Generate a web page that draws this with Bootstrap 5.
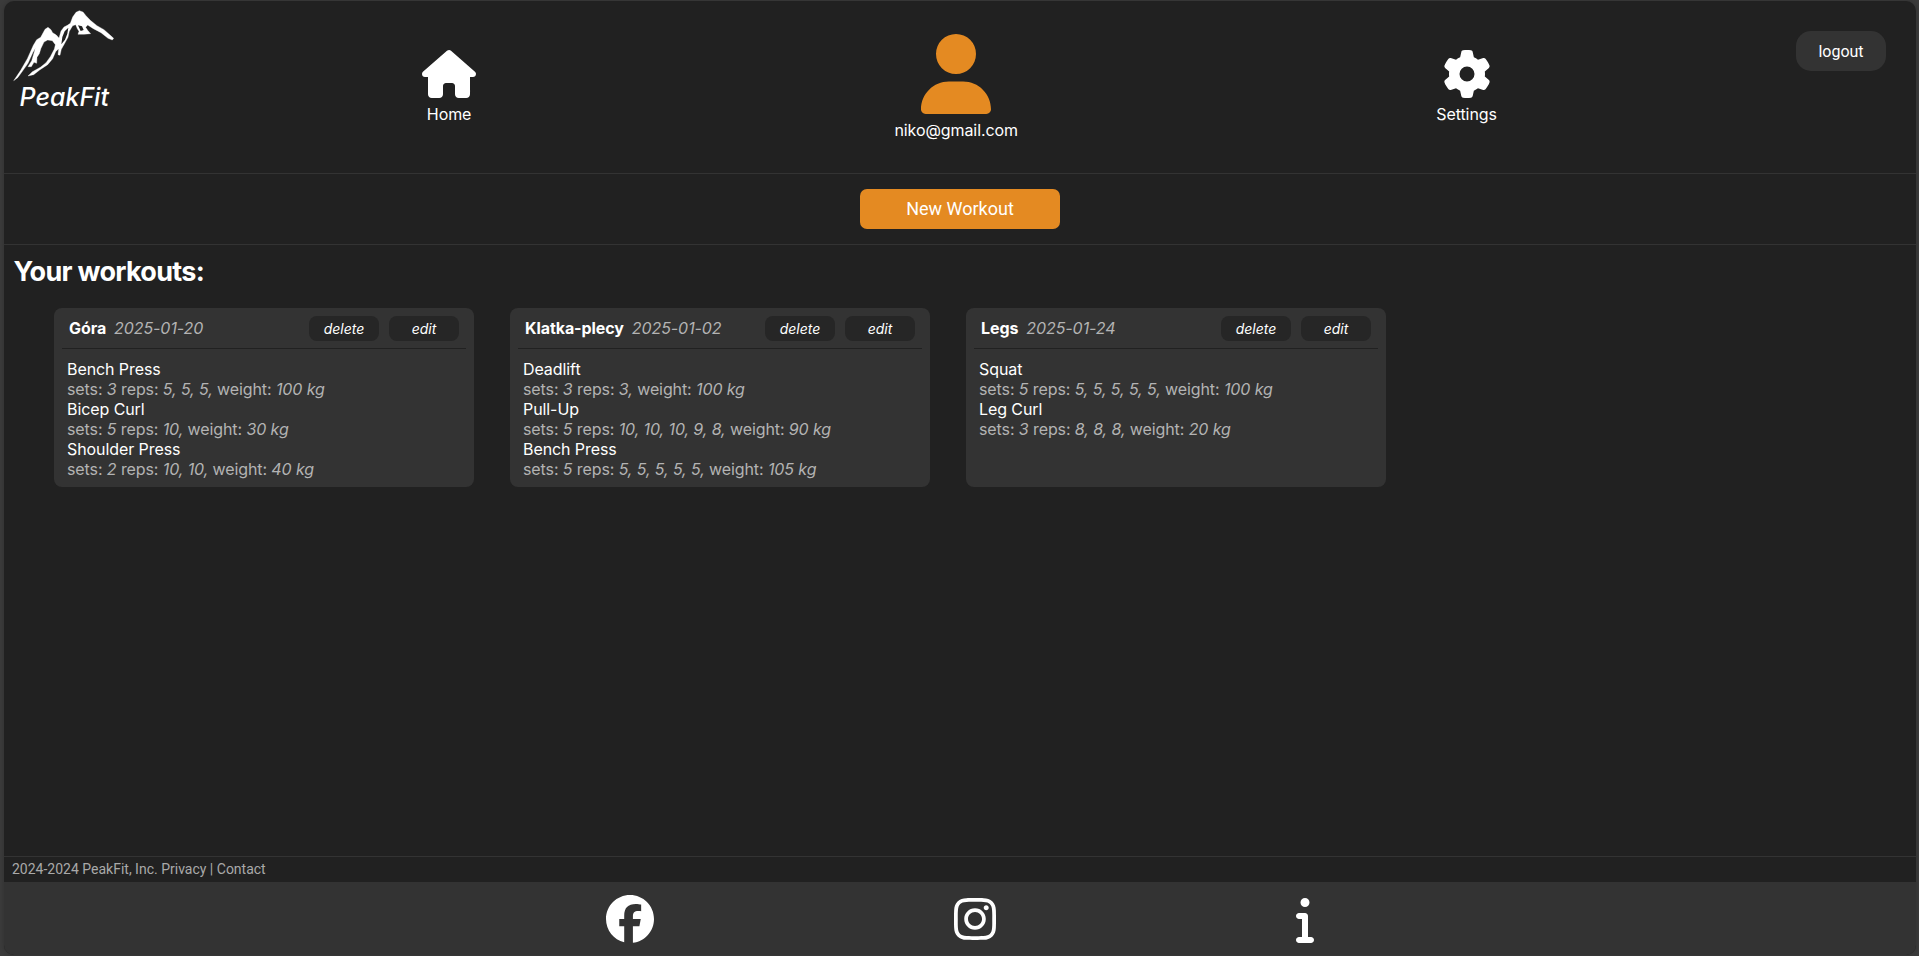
<!DOCTYPE html>
<html lang="en">
<head>
<meta charset="utf-8">
<title>PeakFit</title>
<link href="https://cdn.jsdelivr.net/npm/bootstrap@5.3.0/dist/css/bootstrap.min.css" rel="stylesheet">
<style>
html,body{height:100%}
body{background:#3b3b3b;color:#fff;font-family:Inter,sans-serif;font-size:16px;line-height:20px;letter-spacing:-.08px;padding:1px 3px 1px 4px;overflow:hidden}
a{color:inherit;text-decoration:none}
svg{fill:currentColor;display:block}
.shell{background:#212121;border-radius:10px;overflow:hidden;box-shadow:0 0 5px rgba(0,0,0,.2)}
.topbar{height:173px;border-bottom:1px solid #333}
.side{width:209px}
.side-end{width:210px}
.brand{width:120px;padding-top:7px}
.brand svg{margin-left:-4px}
.brand-name{font-size:25px;line-height:30px;font-style:italic;font-weight:500;letter-spacing:0;padding-left:15.5px;margin-top:-2px}
.rb{font-family:Roboto,sans-serif;letter-spacing:0}
.nav-home{padding-top:49px}
.nav-user{padding-top:33px}
.nav-home span,.nav-user span{margin-top:6px}
.nav-user svg{color:#e48a22}
.btn-logout{width:90px;height:40px;border-radius:15px;background:#333;color:#fff;padding:2px 0 0;margin:30px 30px 0 0}
.actions{height:71px;border-bottom:1px solid #333}
.btn-new{width:200px;height:40px;border-radius:7px;background:#e48a22;color:#fff;font-size:18px;padding:0 0 2px}
.heading{font-size:27px;line-height:32px;font-weight:700;letter-spacing:-.7px;margin:11px 0 20px 9.5px}
.cards{gap:36px;padding-left:50px}
.workout{width:420px;height:179px;background:#333;border-radius:8px;padding:8px}
.workout-head{height:33px;border-bottom:1px solid #212121;padding:0 7px}
.workout-head b,.workout-head .date{padding-top:2px}
.workout-head .date{color:#b3b3b3;font-style:italic;margin-left:8px}
.mini-group{gap:10px}
.btn-mini{width:70px;height:25px;border-radius:8px;background:#262626;color:#fff;font-size:14px;line-height:23px;font-style:italic;padding:0;border:0}
.workout-list{padding:10px 5px 0}
.workout-list p{margin:0;color:#b3b3b3;white-space:nowrap;letter-spacing:-.1px}
.copy{height:26px;border-top:1px solid #333;color:#a9a9a9;font-size:14px;line-height:25px;padding-left:8px}
.social{height:73px;background:#333;gap:300px}
</style>
</head>
<body>
<div class="shell h-100 d-flex flex-column">
  <header class="topbar d-flex flex-shrink-0">
    <div class="side">
      <a class="brand d-block" href="#">
        <svg width="120" height="76" viewBox="0 24 360 228"><path stroke="#fff" stroke-width="1" stroke-linejoin="round" d="M41 242L62 211 82 176 100 136 110 119 122 112 135 88 144 82 153 89 158 98 169 105 177 114 183 93 192 81 202 76 211 70 218 51 228 37 238 32 249 36 258 47 271 61 291 77 312 89 331 106 341 115 337 120 324 115 303 98 280 86 263 75 257 82 263 91 272 101 252 103 234 103 237 94 232 86 227 74 218 77 208 94 204 112 193 132 184 148 180 166 174 164 176 146 167 155 158 176 143 194 119 210 101 224 84 228 97 215 121 202 138 188 151 170 163 147 166 134 157 122 143 120 132 126 123 145 118 161 111 172 110 190 102 187 94 200 84 200 95 182 101 162 106 145 99 157 84 190 65 217 53 233Z"/><path fill="#212121" d="M205 83L194 94 187 111 184 133 195 119 202 101ZM234 76L242 93 251 90 246 79Z"/></svg>
        <div class="brand-name">PeakFit</div>
      </a>
    </div>
    <nav class="flex-grow-1 d-flex justify-content-around">
      <a href="#" class="nav-home d-flex flex-column align-items-center"><svg width="54" height="48" viewBox="0 0 576 512"><path d="M575.8 255.5c0 18-15 32.1-32 32.1h-32l.7 160.2c0 2.7-.2 5.4-.5 8.1V472c0 22.1-17.9 40-40 40H456c-1.1 0-2.2 0-3.3-.1c-1.4 .1-2.8 .1-4.2 .1H416 392c-22.1 0-40-17.9-40-40V448 384c0-17.7-14.3-32-32-32H256c-17.7 0-32 14.3-32 32v64 24c0 22.1-17.9 40-40 40H160 128.1c-1.5 0-3-.1-4.5-.2c-1.2 .1-2.4 .2-3.6 .2H104c-22.1 0-40-17.9-40-40V360c0-.9 0-1.9 .1-2.8V287.6H32c-18 0-32-14-32-32.1c0-9 3-17 10-24L266.4 8c7-7 15-8 22-8s15 2 21 7L564.8 231.5c8 7 12 15 11 24z"/></svg><span>Home</span></a>
      <a href="#" class="nav-user d-flex flex-column align-items-center"><svg width="70" height="80" viewBox="0 0 448 512"><path d="M224 256A128 128 0 1 0 224 0a128 128 0 1 0 0 256zm-45.7 48C79.8 304 0 383.8 0 482.3C0 498.7 13.3 512 29.7 512H418.3c16.4 0 29.7-13.3 29.7-29.7C448 383.8 368.2 304 269.7 304H178.3z"/></svg><span>niko@gmail.com</span></a>
      <a href="#" class="nav-home d-flex flex-column align-items-center"><svg width="48" height="48" viewBox="0 0 512 512"><path d="M495.9 166.6c3.2 8.7 .5 18.4-6.4 24.6l-43.3 39.4c1.1 8.3 1.7 16.8 1.7 25.4s-.6 17.1-1.7 25.4l43.3 39.4c6.9 6.2 9.6 15.9 6.4 24.6c-4.4 11.9-9.7 23.3-15.8 34.3l-4.7 8.1c-6.6 11-14 21.4-22.1 31.2c-5.9 7.2-15.7 9.6-24.5 6.8l-55.7-17.7c-13.4 10.3-28.2 18.9-44 25.4l-12.5 57.1c-2 9.1-9 16.3-18.2 17.8c-13.8 2.3-28 3.5-42.5 3.5s-28.7-1.2-42.5-3.5c-9.2-1.5-16.2-8.7-18.2-17.8l-12.5-57.1c-15.8-6.5-30.6-15.1-44-25.4L83.1 425.9c-8.8 2.8-18.6 .3-24.5-6.8c-8.1-9.8-15.5-20.2-22.1-31.2l-4.7-8.1c-6.1-11-11.4-22.4-15.8-34.3c-3.2-8.7-.5-18.4 6.4-24.6l43.3-39.4C64.6 273.1 64 264.6 64 256s.6-17.1 1.7-25.4L22.4 191.2c-6.9-6.2-9.6-15.9-6.4-24.6c4.4-11.9 9.7-23.3 15.8-34.3l4.7-8.1c6.6-11 14-21.4 22.1-31.2c5.9-7.2 15.7-9.6 24.5-6.8l55.7 17.7c13.4-10.3 28.2-18.9 44-25.4l12.5-57.1c2-9.1 9-16.3 18.2-17.8C227.3 1.2 241.5 0 256 0s28.7 1.2 42.5 3.5c9.2 1.5 16.2 8.7 18.2 17.8l12.5 57.1c15.8 6.5 30.6 15.1 44 25.4l55.7-17.7c8.8-2.8 18.6-.3 24.5 6.8c8.1 9.8 15.5 20.2 22.1 31.2l4.7 8.1c6.1 11 11.4 22.4 15.8 34.3zM256 336a80 80 0 1 0 0-160 80 80 0 1 0 0 160z"/></svg><span>Settings</span></a>
    </nav>
    <div class="side-end d-flex justify-content-end"><button class="btn btn-logout rb">logout</button></div>
  </header>
  <div class="actions d-flex flex-shrink-0 justify-content-center align-items-center"><button class="btn btn-new rb">New Workout</button></div>
  <main class="flex-grow-1">
    <h1 class="heading">Your workouts:</h1>
    <div class="cards d-flex">
      <section class="workout">
        <div class="workout-head d-flex"><b>Góra</b><span class="date">2025-01-20</span><div class="ms-auto d-flex mini-group"><button class="btn btn-mini">delete</button><button class="btn btn-mini">edit</button></div></div>
        <div class="workout-list">
          <div>Bench Press</div><p>sets: <i>3</i> reps: <i>5, 5, 5, </i>weight: <i>100 kg</i></p>
          <div>Bicep Curl</div><p>sets: <i>5</i> reps: <i>10, </i>weight: <i>30 kg</i></p>
          <div>Shoulder Press</div><p>sets: <i>2</i> reps: <i>10, 10, </i>weight: <i>40 kg</i></p>
        </div>
      </section>
      <section class="workout">
        <div class="workout-head d-flex"><b>Klatka-plecy</b><span class="date">2025-01-02</span><div class="ms-auto d-flex mini-group"><button class="btn btn-mini">delete</button><button class="btn btn-mini">edit</button></div></div>
        <div class="workout-list">
          <div>Deadlift</div><p>sets: <i>3</i> reps: <i>3, </i>weight: <i>100 kg</i></p>
          <div>Pull-Up</div><p>sets: <i>5</i> reps: <i>10, 10, 10, 9, 8, </i>weight: <i>90 kg</i></p>
          <div>Bench Press</div><p>sets: <i>5</i> reps: <i>5, 5, 5, 5, 5, </i>weight: <i>105 kg</i></p>
        </div>
      </section>
      <section class="workout">
        <div class="workout-head d-flex"><b>Legs</b><span class="date">2025-01-24</span><div class="ms-auto d-flex mini-group"><button class="btn btn-mini">delete</button><button class="btn btn-mini">edit</button></div></div>
        <div class="workout-list">
          <div>Squat</div><p>sets: <i>5</i> reps: <i>5, 5, 5, 5, 5, </i>weight: <i>100 kg</i></p>
          <div>Leg Curl</div><p>sets: <i>3</i> reps: <i>8, 8, 8, </i>weight: <i>20 kg</i></p>
        </div>
      </section>
    </div>
  </main>
  <footer class="flex-shrink-0">
    <div class="copy rb">2024-2024 PeakFit, Inc. <a href="#">Privacy</a> | <a href="#">Contact</a></div>
    <div class="social d-flex justify-content-center align-items-center">
      <a href="#"><svg width="48" height="48" viewBox="0 0 512 512"><path d="M512 256C512 114.6 397.4 0 256 0S0 114.6 0 256C0 376 82.7 476.8 194.2 504.5V334.2H141.4V256h52.8V222.3c0-87.1 39.4-127.5 125-127.5c16.2 0 44.2 3.2 55.7 6.4V172c-6-.6-16.5-1-29.6-1c-42 0-58.2 15.9-58.2 57.2V256h83.6l-14.4 78.2H287V510.1C413.8 494.8 512 386.9 512 256h0z"/></svg></a>
      <a href="#"><svg width="42" height="48" viewBox="0 0 448 512"><path d="M224.1 141c-63.6 0-114.9 51.3-114.9 114.9s51.3 114.9 114.9 114.9S339 319.5 339 255.9 287.7 141 224.1 141zm0 189.6c-41.1 0-74.7-33.5-74.7-74.7s33.5-74.7 74.7-74.7 74.7 33.5 74.7 74.7-33.6 74.7-74.7 74.7zm146.4-194.3c0 14.9-12 26.8-26.8 26.8-14.9 0-26.8-12-26.8-26.8s12-26.8 26.8-26.8 26.8 12 26.8 26.8zm76.1 27.2c-1.7-35.9-9.9-67.7-36.2-93.9-26.2-26.2-58-34.4-93.9-36.2-37-2.1-147.9-2.1-184.9 0-35.8 1.7-67.6 9.9-93.9 36.1s-34.4 58-36.2 93.9c-2.1 37-2.1 147.9 0 184.9 1.7 35.9 9.9 67.7 36.2 93.9s58 34.4 93.9 36.2c37 2.1 147.9 2.1 184.9 0 35.9-1.7 67.7-9.9 93.9-36.2 26.2-26.2 34.4-58 36.2-93.9 2.1-37 2.1-147.8 0-184.8zM398.8 388c-7.8 19.6-22.9 34.7-42.6 42.6-29.5 11.7-99.5 9-132.1 9s-102.7 2.6-132.1-9c-19.6-7.8-34.7-22.9-42.6-42.6-11.7-29.5-9-99.5-9-132.1s-2.6-102.7 9-132.1c7.8-19.6 22.9-34.7 42.6-42.6 29.5-11.7 99.5-9 132.1-9s102.7-2.6 132.1 9c19.6 7.8 34.7 22.9 42.6 42.6 11.7 29.5 9 99.5 9 132.1s2.7 102.7-9 132.1z"/></svg></a>
      <a href="#"><svg width="18" height="48" viewBox="0 0 192 512"><path d="M48 80a48 48 0 1 1 96 0A48 48 0 1 1 48 80zM0 224c0-17.7 14.3-32 32-32H96c17.7 0 32 14.3 32 32V448h32c17.7 0 32 14.3 32 32s-14.3 32-32 32H32c-17.7 0-32-14.3-32-32s14.3-32 32-32H64V256H32c-17.7 0-32-14.3-32-32z"/></svg></a>
    </div>
  </footer>
</div>
<script src="https://cdn.jsdelivr.net/npm/bootstrap@5.3.0/dist/js/bootstrap.bundle.min.js"></script>
</body>
</html>
